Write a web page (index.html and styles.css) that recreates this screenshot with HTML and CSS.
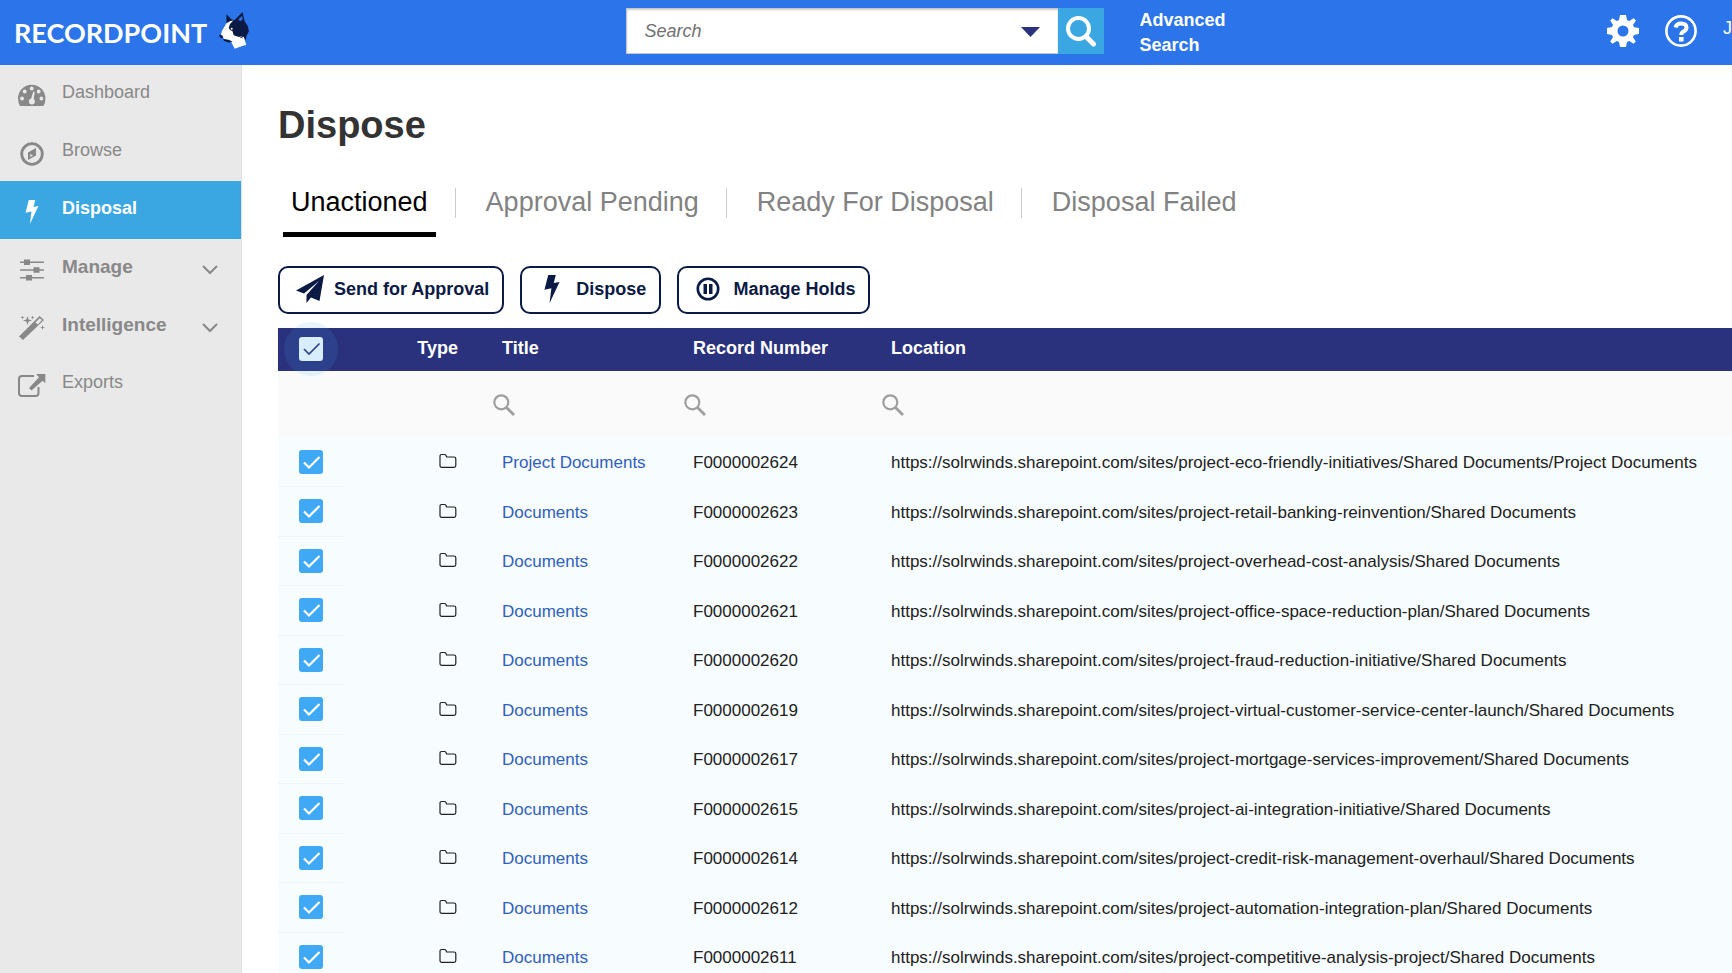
FILE: index.html
```html
<!DOCTYPE html>
<html lang="en">
<head>
  <meta charset="UTF-8">
  <meta name="viewport" content="width=device-width, initial-scale=1.0">
  <title>Dispose - RecordPoint</title>
  <link rel="stylesheet" href="styles.css">
</head>
<body>
  <!-- Shared icons -->
  <svg class="sprite" aria-hidden="true">
    <symbol id="icon-folder" viewBox="0 0 18 16">
      <path d="M1 3.2Q1 1.5 2.7 1.5H5.4Q6.6 1.5 7 2.6L7.6 4H15Q16.8 4 16.8 5.7V12.6Q16.8 14.4 15 14.4H2.8Q1 14.4 1 12.6Z" fill="none" stroke="currentColor" stroke-width="1.2"/>
    </symbol>
    <symbol id="icon-search" viewBox="0 0 22 22">
      <circle cx="8.3" cy="8.3" r="7" fill="none" stroke="currentColor" stroke-width="2.2"/>
      <path d="M13.2 13.2L21 21" stroke="currentColor" stroke-width="2.8"/>
    </symbol>
    <symbol id="icon-bolt" viewBox="0 0 14 26">
      <path d="M3.5 0H10.5L8.6 7.5L14 6.6L4.8 26L6.4 12.4L0 13.8Z" fill="currentColor"/>
    </symbol>
    <symbol id="icon-chevron" viewBox="0 0 16 10">
      <path d="M1 1L8 8L15 1" fill="none" stroke="currentColor" stroke-width="2"/>
    </symbol>
  </svg>

  <header class="topbar">
    <a class="logo" href="#" aria-label="RecordPoint">
      <span class="logo-text">RECORDPOINT</span>
      <svg class="logo-dog" viewBox="0 0 90 112">
        <path d="M22 7L37 22L46 25L71 0L77 28L87 43L90 58L84 70L72 78L52 78L34 60L22 34Z" fill="#0b1a44"/>
        <path d="M58 23L70 11L71 23L64 28Z" fill="#2b74ea"/>
        <path d="M22 34L34 27L43 26L33 36L29 48L40 57L44 70L60 76L70 73L79 100L47 111L38 94L30 84L16 82L5 73L8 58Z" fill="#fff"/>
        <path d="M29 49Q35 42 43 47L45 55L36 57Z" fill="#0b1a44"/>
        <circle cx="38" cy="51" r="3" fill="#fff"/>
        <path d="M0 69L9 70L13 77L7 80L1 75ZM12 82L34 86L41 91L29 92L15 88Z" fill="#0b1a44"/>
        <path d="M61 76L83 71L81 84L72 80Z" fill="#0b1a44"/>
        <path d="M72 76L80 101" stroke="#fff" stroke-width="5"/>
      </svg>
    </a>

    <form class="search" role="search">
      <input class="search-input" type="text" placeholder="Search" aria-label="Search">
      <button class="search-scope" type="button" aria-label="Search options">
        <svg viewBox="0 0 19 10"><path d="M0 0H19L9.5 10Z" fill="currentColor"/></svg>
      </button>
      <button class="search-submit" type="submit" aria-label="Run search">
        <svg viewBox="0 0 32 32">
          <circle cx="13.500" cy="13.500" r="10.500" fill="none" stroke="currentColor" stroke-width="4"/>
          <path d="M21 21.500L28.500 29" stroke="currentColor" stroke-width="5" stroke-linecap="round"/>
        </svg>
      </button>
    </form>
    <a class="advanced" href="#">Advanced Search</a>

    <div class="topbar-tools">
      <button type="button" aria-label="Settings">
        <svg viewBox="0 0 32 32">
          <path fill="currentColor" fill-rule="evenodd" d="M13 0H19L20 5L22.300 6L26.600 3.200L29 5.500L26 9.800L27 12.200L32 13V19L27 20L26 22.300L28.800 26.500L26.500 28.800L22.300 26L20 27L19 32H13L12 27L9.700 26L5.500 28.800L3.200 26.500L6 22.300L5 20L0 19V13L5 12L6 9.700L3.200 5.500L5.500 3.200L9.700 6L12 5ZM16 10.500A5.500 5.500 0 1 0 16 21.500A5.500 5.500 0 1 0 16 10.500Z"/>
        </svg>
      </button>
      <button type="button" aria-label="Help">
        <svg viewBox="0 0 32 32" fill="none" stroke="currentColor">
          <circle cx="16" cy="16" r="14.600" stroke-width="2.600"/>
          <path d="M10.500 12.500Q11.500 8.500 16 8.500Q21.500 8.500 21.500 12.500Q21.500 15 18.500 16.500Q16.300 17.700 16.300 20" stroke-width="4"/>
          <path d="M16.300 22V26.500" stroke-width="4.600"/>
        </svg>
      </button>
      <a class="user" href="#">J</a>
    </div>
  </header>

  <div class="layout">
    <nav class="sidebar">
      <a class="nav-item" href="#">
        <svg class="nav-icon" viewBox="0 0 28 24">
          <path d="M2 22Q0 19 0 14.500A13.700 13.700 0 0 1 27.400 14.500Q27.400 19 25.400 22Z" fill="currentColor"/>
          <g fill="#e9e9e9">
            <circle cx="13.700" cy="4.500" r="1.900"/><circle cx="6.700" cy="7.500" r="1.900"/><circle cx="20.700" cy="7.500" r="1.900"/>
            <circle cx="4" cy="14.500" r="1.900"/><circle cx="23.400" cy="14.500" r="1.900"/>
            <circle cx="13.900" cy="17.500" r="3"/><path d="M12.700 16L15.300 7.500L16.700 8L15.500 17Z"/>
          </g>
        </svg>
        <span>Dashboard</span>
      </a>
      <a class="nav-item" href="#">
        <svg class="nav-icon" viewBox="0 0 28 24">
          <circle cx="14" cy="12" r="10.300" fill="none" stroke="currentColor" stroke-width="2.800"/>
          <path d="M18 6V13.500L10 18V10.500ZM12.300 12V15L15 13.500Z" fill="currentColor" fill-rule="evenodd"/>
        </svg>
        <span>Browse</span>
      </a>
      <a class="nav-item active" href="#">
        <svg class="nav-icon"><use href="#icon-bolt"/></svg>
        <span>Disposal</span>
      </a>
      <a class="nav-item group" href="#">
        <svg class="nav-icon" viewBox="0 0 28 24" fill="currentColor">
          <path d="M2 3.500H26V5H2ZM2 11.300H26V12.800H2ZM2 19H26V20.500H2Z"/>
          <path d="M6 1.500H12V7H6ZM15.500 9.300H21.500V14.800H15.500ZM8 17H14V22.500H8Z"/>
        </svg>
        <span>Manage</span>
        <svg class="chevron"><use href="#icon-chevron"/></svg>
      </a>
      <a class="nav-item group" href="#">
        <svg class="nav-icon" viewBox="0 0 28 24" fill="currentColor">
          <path d="M1 20.500L21.500 0L26 4L5 24ZM17.500 6.500L19.800 8.500L24 4.100L21.700 2.200Z" fill-rule="evenodd"/>
          <path d="M9.500 0L10.600 3.400L14 4.500L10.600 5.600L9.500 9L8.400 5.600L5 4.500L8.400 3.400ZM4.500 -0.500L5 1L6.500 1.500L5 2L4.500 3.500L4 2L2.500 1.500L4 1ZM14.500 -0.500L15 1L16.500 1.500L15 2L14.500 3.500L14 2L12.500 1.500L14 1ZM24.500 9L25.100 10.900L27 11.500L25.100 12.100L24.500 14L23.900 12.100L22 11.500L23.900 10.900Z"/>
        </svg>
        <span>Intelligence</span>
        <svg class="chevron"><use href="#icon-chevron"/></svg>
      </a>
      <a class="nav-item" href="#">
        <svg class="nav-icon" viewBox="0 0 28 24">
          <path d="M16 2H4Q1 2 1 5V19Q1 22 4 22H17.500Q20.500 22 20.500 19V13" fill="none" stroke="currentColor" stroke-width="2"/>
          <path d="M18 0H27.300V9.300L24.600 6.700L13.500 16.500L11 14.100L21 3.300Z" fill="currentColor"/>
        </svg>
        <span>Exports</span>
      </a>
    </nav>

    <main class="content">
      <h1>Dispose</h1>

      <div class="tabs">
        <a class="tab active" href="#">Unactioned</a>
        <a class="tab" href="#">Approval Pending</a>
        <a class="tab" href="#">Ready For Disposal</a>
        <a class="tab" href="#">Disposal Failed</a>
      </div>

      <div class="actions">
        <button class="action" type="button">
          <svg viewBox="0 0 28 28"><path d="M28 0L0 15.500L8 18.500L23 6L10.500 20V28L15 22.500L23.500 26Z" fill="currentColor"/></svg>
          Send for Approval
        </button>
        <button class="action" type="button">
          <svg class="bolt"><use href="#icon-bolt"/></svg>
          Dispose
        </button>
        <button class="action" type="button">
          <svg viewBox="0 0 28 28">
            <circle cx="13" cy="14" r="10.200" fill="none" stroke="currentColor" stroke-width="2.600"/>
            <path d="M8.500 9H12V19H8.500ZM14 9H17.500V19H14Z" fill="currentColor"/>
          </svg>
          Manage Holds
        </button>
      </div>

      <table class="records">
        <colgroup>
          <col class="col-check">
          <col class="col-type">
          <col class="col-title">
          <col class="col-number">
          <col>
        </colgroup>
        <thead>
          <tr class="head">
            <th class="check"><input class="check-all" type="checkbox" aria-label="Select all" checked></th>
            <th class="type">Type</th>
            <th>Title</th>
            <th>Record Number</th>
            <th>Location</th>
          </tr>
          <tr class="filters">
            <td></td>
            <td></td>
            <td><button type="button" aria-label="Filter title"><svg><use href="#icon-search"/></svg></button></td>
            <td><button type="button" aria-label="Filter record number"><svg><use href="#icon-search"/></svg></button></td>
            <td><button type="button" aria-label="Filter location"><svg><use href="#icon-search"/></svg></button></td>
          </tr>
        </thead>
        <tbody>
          <tr>
            <td class="check"><input type="checkbox" aria-label="Select F0000002624" checked></td>
            <td class="type"><svg><use href="#icon-folder"/></svg></td>
            <td><a href="#">Project Documents</a></td>
            <td>F0000002624</td>
            <td>https://solrwinds.sharepoint.com/sites/project-eco-friendly-initiatives/Shared Documents/Project Documents</td>
          </tr>
          <tr>
            <td class="check"><input type="checkbox" aria-label="Select F0000002623" checked></td>
            <td class="type"><svg><use href="#icon-folder"/></svg></td>
            <td><a href="#">Documents</a></td>
            <td>F0000002623</td>
            <td>https://solrwinds.sharepoint.com/sites/project-retail-banking-reinvention/Shared Documents</td>
          </tr>
          <tr>
            <td class="check"><input type="checkbox" aria-label="Select F0000002622" checked></td>
            <td class="type"><svg><use href="#icon-folder"/></svg></td>
            <td><a href="#">Documents</a></td>
            <td>F0000002622</td>
            <td>https://solrwinds.sharepoint.com/sites/project-overhead-cost-analysis/Shared Documents</td>
          </tr>
          <tr>
            <td class="check"><input type="checkbox" aria-label="Select F0000002621" checked></td>
            <td class="type"><svg><use href="#icon-folder"/></svg></td>
            <td><a href="#">Documents</a></td>
            <td>F0000002621</td>
            <td>https://solrwinds.sharepoint.com/sites/project-office-space-reduction-plan/Shared Documents</td>
          </tr>
          <tr>
            <td class="check"><input type="checkbox" aria-label="Select F0000002620" checked></td>
            <td class="type"><svg><use href="#icon-folder"/></svg></td>
            <td><a href="#">Documents</a></td>
            <td>F0000002620</td>
            <td>https://solrwinds.sharepoint.com/sites/project-fraud-reduction-initiative/Shared Documents</td>
          </tr>
          <tr>
            <td class="check"><input type="checkbox" aria-label="Select F0000002619" checked></td>
            <td class="type"><svg><use href="#icon-folder"/></svg></td>
            <td><a href="#">Documents</a></td>
            <td>F0000002619</td>
            <td>https://solrwinds.sharepoint.com/sites/project-virtual-customer-service-center-launch/Shared Documents</td>
          </tr>
          <tr>
            <td class="check"><input type="checkbox" aria-label="Select F0000002617" checked></td>
            <td class="type"><svg><use href="#icon-folder"/></svg></td>
            <td><a href="#">Documents</a></td>
            <td>F0000002617</td>
            <td>https://solrwinds.sharepoint.com/sites/project-mortgage-services-improvement/Shared Documents</td>
          </tr>
          <tr>
            <td class="check"><input type="checkbox" aria-label="Select F0000002615" checked></td>
            <td class="type"><svg><use href="#icon-folder"/></svg></td>
            <td><a href="#">Documents</a></td>
            <td>F0000002615</td>
            <td>https://solrwinds.sharepoint.com/sites/project-ai-integration-initiative/Shared Documents</td>
          </tr>
          <tr>
            <td class="check"><input type="checkbox" aria-label="Select F0000002614" checked></td>
            <td class="type"><svg><use href="#icon-folder"/></svg></td>
            <td><a href="#">Documents</a></td>
            <td>F0000002614</td>
            <td>https://solrwinds.sharepoint.com/sites/project-credit-risk-management-overhaul/Shared Documents</td>
          </tr>
          <tr>
            <td class="check"><input type="checkbox" aria-label="Select F0000002612" checked></td>
            <td class="type"><svg><use href="#icon-folder"/></svg></td>
            <td><a href="#">Documents</a></td>
            <td>F0000002612</td>
            <td>https://solrwinds.sharepoint.com/sites/project-automation-integration-plan/Shared Documents</td>
          </tr>
          <tr>
            <td class="check"><input type="checkbox" aria-label="Select F0000002611" checked></td>
            <td class="type"><svg><use href="#icon-folder"/></svg></td>
            <td><a href="#">Documents</a></td>
            <td>F0000002611</td>
            <td>https://solrwinds.sharepoint.com/sites/project-competitive-analysis-project/Shared Documents</td>
          </tr>
        </tbody>
      </table>
    </main>
  </div>
</body>
</html>
```
FILE: styles.css
```css
* {
  box-sizing: border-box;
}
body {
  display: flex;
  flex-direction: column;
  height: 100vh;
  margin: 0;
  overflow: hidden;
  background: #fff;
  color: #212121;
  font-family: "Liberation Sans", Arial, sans-serif;
  font-size: 18px;
}
a {
  color: inherit;
  text-decoration: none;
}
button {
  padding: 0;
  border: none;
  background: none;
  color: inherit;
  font: inherit;
  cursor: pointer;
}
svg {
  display: block;
}
.sprite {
  display: none;
}

/* top bar */
.topbar {
  display: flex;
  flex: none;
  height: 65px;
  background: #2b74ea;
  color: #fff;
}
.logo {
  display: flex;
  flex: 0 0 36%;
  align-items: center;
  gap: 12px;
  padding-left: 14px;
}
.logo-text {
  font-family: Lato, sans-serif;
  font-size: 27px;
  font-weight: 700;
}
.logo-dog {
  width: 30px;
  height: 37px;
  margin-bottom: 4px;
}
.search {
  display: flex;
  flex: 0 0 478px;
  height: 46px;
  margin: 8px 0 0 2px;
  background: #fff;
  color: #2a327d;
}
.search-input {
  flex: 1;
  min-width: 0;
  padding: 0 18px;
  border: 1px solid #c6c6c6;
  border-right: none;
  background: #fff;
  box-shadow: inset 0 1px 2px #ccc;
  font: inherit;
  font-style: italic;
}
.search-input::placeholder {
  color: #707070;
}
.search-scope {
  width: 54px;
  margin-left: -54px;
}
.search-scope svg {
  width: 19px;
  height: 10px;
  margin: 2px auto 0;
}
.search-submit {
  width: 46px;
  background: #3aa7e3;
  color: #fff;
}
.search-submit svg {
  width: 32px;
  height: 32px;
  margin: 0 auto;
}
.advanced {
  width: 96px;
  margin: 8px 0 0 36px;
  font-weight: bold;
  line-height: 25px;
}
.topbar-tools {
  display: flex;
  align-items: center;
  gap: 26px;
  height: 61px;
  margin-left: auto;
}
.topbar-tools svg {
  width: 32px;
  height: 32px;
}
.user {
  padding-bottom: 4px;
}

/* sidebar */
.layout {
  display: flex;
  flex: 1;
  min-height: 0;
}
.sidebar {
  flex: 0 0 242px;
  border-right: 1px solid #e0e0e0;
  background: #e9e9e9;
  color: #888;
}
.nav-item {
  display: flex;
  align-items: center;
  height: 58px;
  padding: 0 23px 0 18px;
}
.nav-item span {
  flex: 1;
  padding-bottom: 4px;
}
.nav-icon {
  width: 28px;
  height: 24px;
  margin: 4px 16px 0 0;
}
.nav-item.active {
  background: #3aa7e3;
  color: #fff;
  font-weight: bold;
}
.nav-item.group {
  font-size: 19px;
  font-weight: bold;
}
.nav-item.group span {
  padding-bottom: 2px;
}
.chevron {
  width: 16px;
  height: 10px;
  margin-top: 4px;
}

/* page */
.content {
  flex: 1;
  min-width: 0;
  padding: 38px 0 0 36px;
  overflow: hidden;
}
h1 {
  margin: 0;
  color: #333;
  font-size: 38px;
  line-height: 44px;
}
.tabs {
  display: flex;
  margin: 32px 0 29px 5px;
  color: #828282;
  font-size: 27px;
}
.tab {
  position: relative;
  padding: 8px 8px 14px;
  border-bottom: 5px solid transparent;
  line-height: 31px;
}
.tab + .tab {
  margin-left: 42px;
}
.tab + .tab::before {
  content: "";
  position: absolute;
  top: 9px;
  left: -23px;
  width: 1px;
  height: 30px;
  background: #ccc;
}
.tab.active {
  border-color: #000;
  color: #000;
}
.actions {
  display: flex;
  gap: 16px;
  margin-bottom: 14px;
}
.action {
  display: flex;
  align-items: center;
  gap: 10px;
  height: 48px;
  padding: 0 13px 2px 16px;
  border: 2px solid #0b1a44;
  border-radius: 10px;
  background: #fff;
  color: #0b1a44;
  font-weight: bold;
}
.action svg {
  width: 28px;
  height: 28px;
}

/* records table */
.records {
  width: 100%;
  border-collapse: collapse;
  table-layout: fixed;
}
.col-check {
  width: 67px;
}
.col-type {
  width: 147px;
}
.col-title {
  width: 191px;
}
.col-number {
  width: 198px;
}
.records th,
.records td {
  padding: 13px 0 11px 10px;
  line-height: 1.5;
  text-align: left;
  white-space: nowrap;
}
.records .head th {
  height: 43px;
  padding-top: 0;
  padding-bottom: 2px;
  background: #2a327d;
  color: #fff;
}
.records .filters td {
  height: 66px;
  padding: 2px 0 0 10px;
  background: #fafafa;
  color: #9e9e9e;
}
.filters button {
  display: block;
  margin-left: -9px;
}
.filters svg {
  width: 22px;
  height: 22px;
}
tbody {
  font-size: 17px;
}
tbody tr {
  background: #f7fcff;
}
tbody a {
  color: #3060bd;
}
.records .check {
  padding: 0 0 0 21px;
}
tbody .check {
  border-bottom: 1px solid #eff6fb;
}
.records .type {
  padding-right: 34px;
  text-align: right;
}
tbody .type {
  vertical-align: top;
}
.type svg {
  width: 18px;
  height: 16px;
  margin: 3px 1px 0 auto;
}
input[type="checkbox"] {
  display: block;
  width: 24px;
  height: 24px;
  margin: 0;
  border-radius: 3px;
  appearance: none;
  background: #3fa9f5 url("data:image/svg+xml,%3Csvg xmlns='http://www.w3.org/2000/svg' viewBox='0 0 24 24'%3E%3Cpath d='M5 12.500L10 17.500L20.500 7' fill='none' stroke='%23fff' stroke-width='2.200'/%3E%3C/svg%3E");
}
input[type="checkbox"].check-all {
  background: #edf6ff url("data:image/svg+xml,%3Csvg xmlns='http://www.w3.org/2000/svg' viewBox='0 0 24 24'%3E%3Cpath d='M5 12L10 17L20.500 6.500' fill='none' stroke='%232a327d' stroke-width='1.600'/%3E%3C/svg%3E");
}
/* focus ripple behind the select-all box */
.head .check {
  position: relative;
}
.check-all::before {
  content: "";
  position: absolute;
  top: -6px;
  left: 6px;
  width: 54px;
  height: 54px;
  border-radius: 50%;
  background: #3fa9f5;
  opacity: 0.12;
}
```
